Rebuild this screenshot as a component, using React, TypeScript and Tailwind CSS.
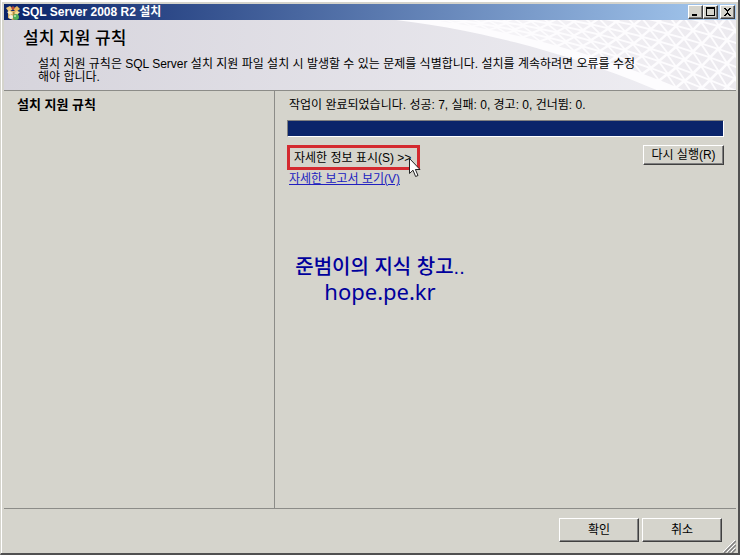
import type { ReactNode } from "react";

const raised =
  "border border-t-white border-l-white border-b-[#404040] border-r-[#404040] bg-[#d5d4cc]";

function CaptionButton({ label, children }: { label: string; children: ReactNode }) {
  return (
    <button
      type="button"
      aria-label={label}
      className={`${raised} flex h-[14px] w-[15px] items-center justify-center shadow-[inset_-1px_-1px_0_#808080]`}
    >
      <svg width="11" height="10" viewBox="0 0 11 10" shapeRendering="crispEdges">
        {children}
      </svg>
    </button>
  );
}

function SetupIcon() {
  return (
    <svg width="14" height="15" viewBox="0 0 14 15">
      <path d="M2 6h10v7l-5 2-5-2z" fill="#d9b268" />
      <path d="M7 7h5v6l-5 2z" fill="#b08840" />
      <path d="M0 3l4-2 3 3-4 3z" fill="#f0c878" />
      <path d="M7 4l4-3 3 3-4 3z" fill="#e8b860" />
      <path d="M5 3l2-2 2 2-2 2z" fill="#b84838" />
      <path d="M1 7l3-1 3 2-3 2z" fill="#f8ebc0" />
      <path d="M8 8l3-2 3 1-3 3z" fill="#f3dc92" />
      <circle cx="10" cy="12" r="3" fill="#4fae5a" />
      <circle cx="9" cy="11" r="1" fill="#b8e8b0" />
      <circle cx="5" cy="12" r="2" fill="#f4f1e2" />
    </svg>
  );
}

// Lower edge of the white sweep; the strands run above it and fan out to the right
function edgeY(x: number) {
  return 0.12 * x + 0.00057 * x * x;
}

function strandY(x: number, k: number) {
  return edgeY(x) - k * (3 + x / 38);
}

function meshPath() {
  let d = "";
  for (let k = 1; k < 13; k++) {
    for (let i = 2; i < 22; i++) {
      const x = i * 17 + (k % 2) * 8;
      const top = (px: number) => strandY(px, k + 1) + 1;
      const bottom = (px: number) => strandY(px, k) - 1;
      d += `M${x + 2} ${bottom(x + 2)}L${x + 15} ${bottom(x + 15)}L${x + 8} ${top(x + 8) + 1}Z`;
      d += `M${x + 10} ${top(x + 10)}L${x + 23} ${top(x + 23)}L${x + 17} ${bottom(x + 17) - 1}Z`;
    }
  }
  return d;
}

function HeaderMesh() {
  const edge = Array.from({ length: 21 }, (_, i) => `L${i * 17} ${edgeY(i * 17)}`).join("");
  return (
    <svg
      className="absolute top-0 right-0 h-full w-[340px]"
      viewBox="0 0 340 70"
      preserveAspectRatio="none"
      aria-hidden="true"
    >
      <defs>
        <linearGradient id="meshFade" x1="0" x2="340" y1="0" y2="0" gradientUnits="userSpaceOnUse">
          <stop offset="0.1" stopColor="#eceaef" stopOpacity="0.2" />
          <stop offset="0.6" stopColor="#eceaef" stopOpacity="0.8" />
          <stop offset="1" stopColor="#eceaef" />
        </linearGradient>
      </defs>
      <path d={`M0 0${edge}V0Z`} fill="#fdfcfe" />
      <path d={meshPath()} fill="url(#meshFade)" />
    </svg>
  );
}

function Cursor() {
  return (
    <svg
      className="pointer-events-none absolute top-[13px] left-[122px]"
      width="12"
      height="20"
      viewBox="0 0 12 20"
      aria-hidden="true"
    >
      <path
        d="M.5 .5V15.5L4 12.2L6.6 18.5L9 17.5L6.4 11.5H11Z"
        fill="#fff"
        stroke="#222"
      />
    </svg>
  );
}

export default function App() {
  return (
    <div className="flex min-h-screen flex-col border-r-2 border-b-2 border-l border-[#505050] border-l-[#d5d4cc] bg-[#d5d4cc] font-['Liberation_Sans','Noto_Sans_CJK_KR',sans-serif] text-xs text-black">
      <div className="flex flex-1 flex-col border-t-2 border-l border-white pt-[2px] pr-[2px] pl-[2px]">
        <header className="flex h-4 items-center justify-between bg-linear-to-r/srgb from-[#0a246a] to-[#a6caf0] pr-px pl-[2px]">
          <div className="flex items-center gap-[2px]">
            <SetupIcon />
            <h1 className="text-xs leading-4 font-bold text-white">SQL Server 2008 R2 설치</h1>
          </div>
          <div className="flex">
            <CaptionButton label="최소화">
              <path d="M2 7h5v2H2z" />
            </CaptionButton>
            <CaptionButton label="최대화">
              <path d="M1 0h9v9H1zM2 2v6h7V2z" fillRule="evenodd" />
            </CaptionButton>
            <span className="w-[2px]" />
            <CaptionButton label="닫기">
              <path d="M2 1h2l1 2h1l1-2h2L6 5l3 4H7L6 7H5L4 9H2l3-4z" />
            </CaptionButton>
          </div>
        </header>

        <section className="relative min-h-[71px] border-b border-[#8c8c88] bg-linear-to-r/srgb from-[#d6d4dc] to-[#f0eff4]">
          <HeaderMesh />
          <div className="relative pt-[9px] pl-[19px]">
            <h2 className="text-[17px] leading-5 font-medium">설치 지원 규칙</h2>
            <p className="mt-[9px] pl-[15px] leading-[13px]">
              설치 지원 규칙은 SQL Server 설치 지원 파일 설치 시 발생할 수 있는 문제를 식별합니다. 설치를 계속하려면 오류를 수정
              <br />
              해야 합니다.
            </p>
          </div>
        </section>

        <main className="flex flex-1">
          <aside className="w-[271px] border-r border-[#8c8c88] pt-[6px] pl-[13px]">
            <h3 className="text-[13px] leading-4 font-bold">설치 지원 규칙</h3>
          </aside>
          <section className="flex-1 pt-[6px] pr-3 pl-3">
            <p className="pl-[2px] leading-4">작업이 완료되었습니다. 성공: 7, 실패: 0, 경고: 0, 건너뜀: 0.</p>
            <div
              role="progressbar"
              aria-label="진행률"
              aria-valuenow={100}
              className="mt-[7px] h-[17px] border border-t-[#808080] border-r-white border-b-white border-l-[#808080] bg-[#0a246a]"
            />
            <div className="mt-2 flex items-start justify-between">
              <div className="relative">
                <button
                  type="button"
                  className="flex h-[25px] w-[133px] items-center border-[3px] border-[#d42a30] pl-1 leading-4 whitespace-nowrap"
                >
                  자세한 정보 표시(S) &gt;&gt;
                </button>
                <Cursor />
              </div>
              <button type="button" className={`${raised} h-5 w-[81px] shadow-[inset_-1px_-1px_0_#808080]`}>
                다시 실행(R)
              </button>
            </div>
            <a href="#report" className="mt-px ml-[2px] block w-fit leading-4 text-[#2020c0] underline">
              자세한 보고서 보기(V)
            </a>
            <div className="mt-[68px] ml-2 w-[170px] text-center text-[#00009c]">
              <p className="text-xl leading-6 font-medium">준범이의 지식 창고..</p>
              <p className="font-['Noto_Sans',sans-serif] text-[22px] leading-6">hope.pe.kr</p>
            </div>
          </section>
        </main>

        <footer className="relative flex h-[45px] justify-end gap-[3px] border-t border-[#8c8c88] pt-[9px] pr-[14px]">
          <button type="button" className={`${raised} h-6 w-20 shadow-[inset_-1px_-1px_0_#808080]`}>
            확인
          </button>
          <button type="button" className={`${raised} h-6 w-20 shadow-[inset_-1px_-1px_0_#808080]`}>
            취소
          </button>
          <svg className="absolute right-0 bottom-0" width="13" height="13" viewBox="0 0 13 13" aria-hidden="true">
            <path d="M1 13L13 1M5 13L13 5M9 13L13 9" stroke="#808080" strokeWidth="1.5" />
            <path d="M0 12L12 0M4 12L12 4M8 12L12 8" stroke="#fff" />
          </svg>
        </footer>
      </div>
    </div>
  );
}
